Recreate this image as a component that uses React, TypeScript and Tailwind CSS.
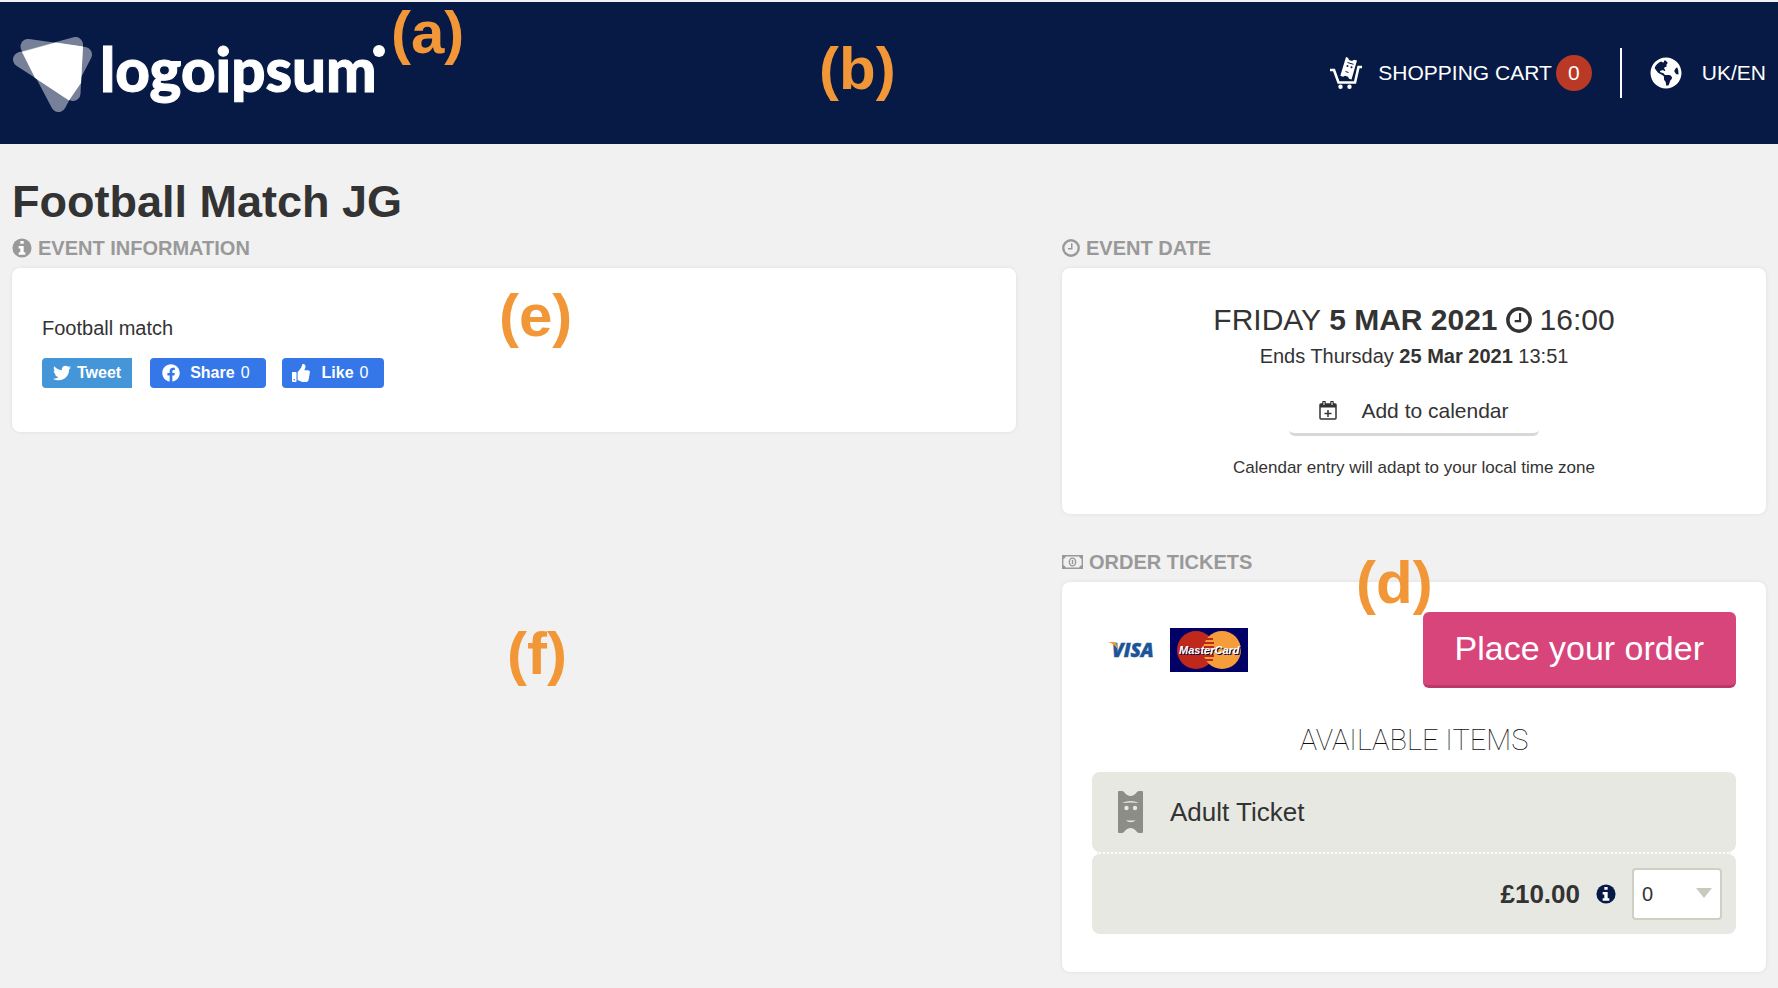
import React, { useState } from 'react';
import { FaFacebook, FaGlobeAmericas, FaThumbsUp, FaTwitter } from 'react-icons/fa';

interface IconProps {
  className?: string;
}

function LogoMark({ className }: IconProps) {
  return (
    <svg viewBox="-1 -2 80 78" className={className} aria-hidden="true">
      <g fill="#fff" stroke="#fff" strokeLinejoin="round" strokeWidth="15" opacity=".45">
        <path d="M7.5 23.500 62.500 8.500 60 57.500Z" />
      </g>
      <g fill="#fff" stroke="#fff" strokeLinejoin="round" strokeWidth="15" opacity=".45">
        <path d="M15 10.500 71.500 18.500 45.500 68.500Z" />
      </g>
      <path d="M9 16 43 6.500 70 10.500 68 47 56 64.500 22 42Z" fill="#fff" />
    </svg>
  );
}

function InfoIcon({ className }: IconProps) {
  return (
    <svg viewBox="0 0 24 24" className={className} aria-hidden="true">
      <circle cx="12" cy="12" r="11.500" fill="currentColor" />
      <path d="M10 3.500h4v3.500h-4ZM8 9.500h6v7.500h2v3H8v-3h2v-4.500H8Z" fill="#fff" />
    </svg>
  );
}

function TicketCartIcon({ className }: IconProps) {
  return (
    <svg viewBox="0 0 32 32" className={className} fill="none" aria-hidden="true">
      <path d="M0 13h4L8.500 25.500H25L28.500 10H32" stroke="#fff" strokeWidth="2.600" />
      <path d="m16 0 2 .7 1 2.300 3 1 2-1.300 3 .8L21.500 22.500l-2.500-.8-1-2-3-1-2 1-2.700-1Z" fill="#fff" />
      <path d="m17.500 5.500 6 1.800M15.500 14.500l3 1" stroke="#061a45" />
      <circle cx="17.500" cy="9" r="1" fill="#061a45" />
      <circle cx="21.500" cy="10.200" r="1" fill="#061a45" />
      <circle cx="10.500" cy="29.800" r="2.200" fill="#fff" />
      <circle cx="19.500" cy="29.800" r="2.200" fill="#fff" />
    </svg>
  );
}

function ClockIcon({ className }: IconProps) {
  return (
    <svg viewBox="0 0 24 24" className={className} fill="none" stroke="currentColor" aria-hidden="true">
      <circle cx="12" cy="12" r="10.300" strokeWidth="3.200" />
      <path d="M13 5.500V13H8" strokeWidth="2" />
    </svg>
  );
}

function MoneyIcon({ className }: IconProps) {
  return (
    <svg viewBox="0 0 30 20" className={className} fill="none" stroke="currentColor" aria-hidden="true">
      <path d="M1 1h28v18H1Z" strokeWidth="2" />
      <path d="M1 1h4a4 4 0 0 1-4 4ZM29 1v4a4 4 0 0 1-4-4ZM1 19v-4a4 4 0 0 1 4 4ZM29 19h-4a4 4 0 0 1 4-4Z" fill="currentColor" />
      <ellipse cx="15" cy="10" rx="4.500" ry="5.500" strokeWidth="2" />
      <path d="M15 7v6" strokeWidth="2" />
    </svg>
  );
}

function CalendarIcon({ className }: IconProps) {
  return (
    <svg viewBox="0 0 18 19" className={className} fill="none" stroke="currentColor" aria-hidden="true">
      <rect x="1" y="3" width="16" height="15" rx="1" strokeWidth="1.500" />
      <path d="M1 3h16v3.500H1Z" fill="currentColor" stroke="none" />
      <path d="M5 1v3M13 1v3" strokeWidth="3.500" strokeLinecap="round" />
      <path d="M5 1v3M13 1v3" stroke="#fff" strokeWidth="1" />
      <path d="M9 9v7M5.500 12.500h7" strokeWidth="1.500" />
    </svg>
  );
}

function TicketIcon({ className }: IconProps) {
  return (
    <svg viewBox="0 0 25 42" className={className} aria-hidden="true">
      <path
        d="M1 0h3q1 0 2 1 3 4 6.500 4T19 1q1-1 2-1h3q1 0 1 1v40q0 1-1 1h-3q-1 0-2-1-3-4-6.500-4T6 41q-1 1-2 1H1q-1 0-1-1V1q0-1 1-1Z"
        fill="#8b8d86"
      />
      <path d="M4 12q8.500-4 17 0-8.500-1-17 0Z" fill="#e6e8e1" />
      <ellipse cx="8.500" cy="17" rx="2.200" ry="2.200" fill="#e6e8e1" />
      <ellipse cx="17" cy="17" rx="2.200" ry="2.200" fill="#e6e8e1" />
      <path d="M8 29q4.700 1 9.500 0-1.500 2.200-4.700 2.200T8 29Z" fill="#e6e8e1" />
    </svg>
  );
}

function VisaLogo() {
  return (
    <svg viewBox="0 0 48 30" className="w-12 h-[30px]" role="img" aria-label="Visa">
      <text x="4" y="22" fontFamily="Open Sans" fontWeight="800" fontStyle="italic" fontSize="19" fill="#1c5499" stroke="#1c5499" strokeWidth=".5">
        VISA
      </text>
      <path d="M0 7h6q2 0 2.500 2l1.500 6Q7 9 0 7Z" fill="#ef9d33" />
    </svg>
  );
}

function MasterCardLogo() {
  return (
    <svg viewBox="0 0 78 44" className="w-[78px] h-11" role="img" aria-label="MasterCard">
      <rect width="78" height="44" fill="#000066" />
      <circle cx="26" cy="22" r="19" fill="#c1281c" />
      <circle cx="52" cy="22" r="19" fill="#f49d3a" />
      <path d="M36 11h7M34 15h10M34 19h10M34 28h10M35 32h8" stroke="#c1281c" strokeWidth="2" />
      <g fontFamily="Liberation Sans" fontWeight="700" fontStyle="italic" fontSize="11">
        <text x="10" y="27" fill="#000044" aria-hidden="true">MasterCard</text>
        <text x="9" y="26" fill="#fff">MasterCard</text>
      </g>
    </svg>
  );
}

interface MarkerProps {
  label: string;
  className: string;
}

function Marker({ label, className }: MarkerProps) {
  return (
    <span className={`absolute text-[60px] leading-none font-bold text-[#f29737] ${className}`}>
      {label}
    </span>
  );
}

function SectionTitle({ icon, children }: { icon: React.ReactNode; children: React.ReactNode }) {
  return (
    <h2 className="flex items-center gap-1.5 h-10 text-[20px] font-bold text-[#999]">
      {icon}
      {children}
    </h2>
  );
}

const card = 'bg-white rounded-lg shadow-[0_0_4px_rgba(0,0,0,0.08)]';

export default function App() {
  const [quantity, setQuantity] = useState('0');

  return (
    <div className="relative min-h-screen bg-[#f1f1f1] pt-0.5 text-[#333] font-['Liberation_Sans',Arial,sans-serif]">
      <header className="flex items-center justify-between h-[142px] px-3 bg-[#061a45] text-white">
        <a href="#" className="flex items-center gap-2" aria-label="logoipsum">
          <LogoMark className="w-20 h-[78px]" />
          <span className="flex items-start pb-2 font-['Lato',sans-serif] font-black text-[60px] leading-[72px] [-webkit-text-stroke:1px_white]">
            logoipsum
            <span className="w-3 h-3 mt-3 -ml-1 rounded-full bg-white" />
          </span>
        </a>

        <nav className="flex items-center text-[21px]">
          <a href="#" className="flex items-center">
            <TicketCartIcon className="w-8 h-8 mr-4" />
            SHOPPING CART
            <span className="flex items-center justify-center w-9 h-9 ml-1 rounded-full bg-[#ba3826]">0</span>
          </a>
          <span className="w-0.5 h-[50px] mx-7 bg-white" />
          <a href="#" className="flex items-center gap-5">
            <FaGlobeAmericas className="w-8 h-8" />
            UK/EN
          </a>
        </nav>
      </header>

      <main className="px-3 pt-8">
        <h1 className="text-[45px] leading-[52px] font-bold">Football Match JG</h1>

        <div className="grid grid-cols-12 gap-x-[46px] items-start">
          <section className="col-span-7">
            <SectionTitle icon={<InfoIcon className="w-5 h-5" />}>EVENT INFORMATION</SectionTitle>
            <div className={`${card} px-[30px] pt-12 pb-11`}>
              <p className="text-[20px] leading-6">Football match</p>
              <div className="flex items-center mt-[18px] text-base font-bold text-white">
                <button className="flex items-center gap-1.5 h-[30px] px-[11px] rounded-l bg-[#4595d9]">
                  <FaTwitter className="w-[18px] h-[18px]" />
                  Tweet
                </button>
                <button className="flex items-center h-[30px] ml-[18px] pl-3 pr-4 rounded bg-[#3577e8]">
                  <FaFacebook className="w-[18px] h-[18px] mr-2.5" />
                  Share <span className="ml-1.5 font-normal">0</span>
                </button>
                <button className="flex items-center h-[30px] ml-4 pl-2.5 pr-4 rounded bg-[#3577e8]">
                  <FaThumbsUp className="w-[18px] h-[18px] mr-3" />
                  Like <span className="ml-1.5 font-normal">0</span>
                </button>
              </div>
            </div>
          </section>

          <div className="col-span-5">
            <section>
              <SectionTitle icon={<ClockIcon className="w-[18px] h-[18px]" />}>EVENT DATE</SectionTitle>
              <div className={`${card} flex flex-col items-center pt-8 pb-[34px] text-center`}>
                <p className="flex items-center gap-2 text-[30px] leading-10">
                  <span>FRIDAY</span>
                  <strong>5 MAR 2021</strong>
                  <ClockIcon className="w-[26px] h-[26px]" />
                  <span>16:00</span>
                </p>
                <p className="text-[20px] leading-8">
                  Ends Thursday <strong>25 Mar 2021</strong> 13:51
                </p>
                <button className="flex items-center h-12 mt-4 px-[30px] gap-6 rounded-md border-b-3 border-[#d8d8d8] text-[21px]">
                  <CalendarIcon className="w-[18px] h-[19px]" />
                  Add to calendar
                </button>
                <p className="mt-5 text-[17px] leading-6">Calendar entry will adapt to your local time zone</p>
              </div>
            </section>

            <section className="mt-7">
              <SectionTitle icon={<MoneyIcon className="w-[21px] h-3.5" />}>ORDER TICKETS</SectionTitle>
              <div className={`${card} px-[30px] pt-[30px] pb-[38px]`}>
                <div className="flex items-center justify-between">
                  <div className="flex items-center gap-3.5 pl-4">
                    <VisaLogo />
                    <MasterCardLogo />
                  </div>
                  <button className="h-[76px] px-8 rounded-md border-b-3 border-[#b93a67] bg-[#d8457b] text-[34px] text-white">
                    Place your order
                  </button>
                </div>

                <h3 className="mt-8 mb-3 text-center font-['Roboto',sans-serif] font-thin text-[29px] leading-10 text-[#111]">
                  AVAILABLE ITEMS
                </h3>

                <div className="flex items-center gap-[27px] h-20 px-[26px] rounded-lg bg-[#e6e8e1] text-[26px]">
                  <TicketIcon className="w-[25px] h-[42px]" />
                  Adult Ticket
                </div>
                <div className="mx-1 border-t-2 border-dotted border-white bg-[#e6e8e1]" />
                <div className="flex items-center justify-end h-20 px-3.5 rounded-lg bg-[#e6e8e1]">
                  <strong className="text-[26px]">£10.00</strong>
                  <InfoIcon className="w-5 h-5 mx-4 text-[#061a45]" />
                  <div className="relative">
                    <select
                      aria-label="Adult Ticket quantity"
                      value={quantity}
                      onChange={(e) => setQuantity(e.target.value)}
                      className="appearance-none w-[90px] h-[52px] pl-2 rounded border-2 border-[#cfcfc4] bg-white text-[20px]"
                    >
                      {['0', '1', '2', '3', '4', '5'].map((n) => (
                        <option key={n}>{n}</option>
                      ))}
                    </select>
                    <svg viewBox="0 0 16 10" className="absolute top-5 right-2.5 w-4 h-2.5 pointer-events-none" aria-hidden="true">
                      <path d="M0 0h16L8 10Z" fill="#c9c9bd" />
                    </svg>
                  </div>
                </div>
              </div>
            </section>
          </div>
        </div>
      </main>

      <Marker label="(a)" className="left-[391px] top-[3px]" />
      <Marker label="(b)" className="left-[819px] top-[39px]" />
      <Marker label="(e)" className="left-[499px] top-[286px]" />
      <Marker label="(f)" className="left-[507px] top-[624px]" />
      <Marker label="(d)" className="left-[1356px] top-[553px]" />
    </div>
  );
}
